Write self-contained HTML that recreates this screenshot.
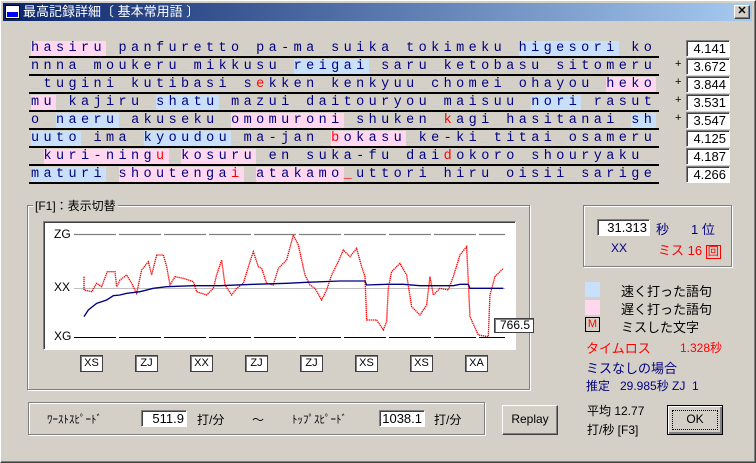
<!DOCTYPE html>
<html><head><meta charset="utf-8"><style>
*{margin:0;padding:0;box-sizing:border-box}
body{width:756px;height:463px;background:#d4d0c8;position:relative;overflow:hidden;font-family:"Liberation Sans","Noto Sans CJK JP",sans-serif;font-size:12px}
.a{position:absolute}
#win{position:absolute;left:0;top:0;width:756px;height:463px;border:1px solid #fff;border-right-color:#404040;border-bottom-color:#404040;box-shadow:inset -1px -1px 0 #808080}
#tb{position:absolute;left:3px;top:3px;width:749px;height:18px;background:linear-gradient(90deg,#0a246a,#a6caf0);color:#fff;font-size:13px;line-height:18px;padding-left:20px;font-family:"Liberation Sans","Noto Sans CJK JP",sans-serif}
.row{position:absolute;left:31px;height:17px;font-family:"Liberation Mono",monospace;font-size:13.5px;letter-spacing:4.4px;color:#000080;line-height:17px;white-space:pre;width:640px}
.rule{position:absolute;left:29px;width:630px;height:2px;background:#000}
.p{background:#ffd8f0}.b{background:#c8e0fa}.u{color:#c8c8c8}.r{color:#f00}
.num{position:absolute;left:686px;width:44px;height:17px;background:#fff;border:1px solid #808080;border-right-color:#fff;border-bottom-color:#fff;box-shadow:inset 1px 1px 0 #404040;text-align:right;padding-right:3px;font-size:13px;line-height:15px}
.plus{position:absolute;left:675px;font-size:11px}
.grp{position:absolute;border:1px solid #808080;box-shadow:1px 1px 0 #fff,inset 1px 1px 0 #fff}
.inp{position:absolute;background:#fff;border:1px solid #808080;border-right-color:#fff;border-bottom-color:#fff;box-shadow:inset 1px 1px 0 #404040;text-align:right;padding-right:2px;font-size:13px;line-height:16px}
.sb{position:absolute;width:23px;height:17px;background:#fff;border:1px solid #404040;box-shadow:inset 1px 1px 0 #808080;font-size:11px;text-align:center;line-height:15px}
.btn{position:absolute;background:#d4d0c8;border:1px solid #fff;border-right-color:#404040;border-bottom-color:#404040;box-shadow:inset -1px -1px 0 #808080;text-align:center;font-size:12px}
.nv{color:#000080}.rd{color:#f00}
</style></head><body>
<div id="win"></div>
<div id="tb">最高記録詳細〔 基本常用語 〕</div>
<div class="a" style="left:5px;top:5px;width:15px;height:14px;background:#fff;border:1px solid #000"><div style="position:absolute;left:1px;top:6px;width:11px;height:5px;background:#00f"></div></div>
<div class="btn" style="left:734px;top:5px;width:16px;height:14px;font-size:11px;line-height:11px;font-weight:bold">✕</div>

<div class="row" style="top:40px"><span class="p">hasiru</span><span class="u">_</span>panfuretto<span class="u">_</span>pa-ma<span class="u">_</span>suika<span class="u">_</span>tokimeku<span class="u">_</span><span class="b">higesori</span><span class="u">_</span>ko</div>
<div class="row" style="top:58px">nnna<span class="u">_</span>moukeru<span class="u">_</span>mikkusu<span class="u">_</span><span class="b">reigai</span><span class="u">_</span>saru<span class="u">_</span>ketobasu<span class="u">_</span>sitomeru</div>
<div class="row" style="top:76px"><span class="u">_</span>tugini<span class="u">_</span>kutibasi<span class="u">_</span>s<span class="r">e</span>kken<span class="u">_</span>kenkyuu<span class="u">_</span>chomei<span class="u">_</span>ohayou<span class="u">_</span><span class="p">heko</span></div>
<div class="row" style="top:94px"><span class="p">mu</span><span class="u">_</span>kajiru<span class="u">_</span><span class="b">shatu</span><span class="u">_</span>mazui<span class="u">_</span>daitouryou<span class="u">_</span>maisuu<span class="u">_</span><span class="b">nori</span><span class="u">_</span>rasut</div>
<div class="row" style="top:112px">o<span class="u">_</span><span class="b">naeru</span><span class="u">_</span>akuseku<span class="u">_</span><span class="p">omomuroni</span><span class="u">_</span>shuken<span class="u">_</span><span class="r">k</span>agi<span class="u">_</span>hasitanai<span class="u">_</span><span class="b">sh</span></div>
<div class="row" style="top:130px"><span class="b">uuto</span><span class="u">_</span>ima<span class="u">_</span><span class="b">kyoudou</span><span class="u">_</span>ma-jan<span class="u">_</span><span class="p"><span class="r">b</span>okasu</span><span class="u">_</span>ke-ki<span class="u">_</span>titai<span class="u">_</span>osameru</div>
<div class="row" style="top:148px"><span class="u">_</span><span class="p">kuri-ning<span class="r">u</span></span><span class="u">_</span><span class="p">kosuru</span><span class="u">_</span>en<span class="u">_</span>suka-fu<span class="u">_</span>dai<span class="r">d</span>okoro<span class="u">_</span>shouryaku<span class="u">_</span></div>
<div class="row" style="top:166px"><span class="b">maturi</span><span class="u">_</span><span class="p">shoutenga<span class="r">i</span></span><span class="u">_</span><span class="p">atakamo</span><span class="r">_</span>uttori<span class="u">_</span>hiru<span class="u">_</span>oisii<span class="u">_</span>sarige</div>
<div class="rule" style="top:56px"></div><div class="rule" style="top:74px"></div><div class="rule" style="top:92px"></div><div class="rule" style="top:110px"></div><div class="rule" style="top:128px"></div><div class="rule" style="top:146px"></div><div class="rule" style="top:164px"></div><div class="rule" style="top:182px"></div>

<div class="num" style="top:40px">4.141</div>
<div class="plus" style="top:58px">+</div><div class="num" style="top:58px">3.672</div>
<div class="plus" style="top:76px">+</div><div class="num" style="top:76px">3.844</div>
<div class="plus" style="top:94px">+</div><div class="num" style="top:94px">3.531</div>
<div class="plus" style="top:112px">+</div><div class="num" style="top:112px">3.547</div>
<div class="num" style="top:130px">4.125</div>
<div class="num" style="top:148px">4.187</div>
<div class="num" style="top:166px">4.266</div>

<div class="grp" style="left:27px;top:205px;width:503px;height:185px"></div>
<div class="a" style="left:33px;top:197px;background:#d4d0c8;padding:0 2px;font-size:12px">[F1]：表示切替</div>
<div class="a" style="left:43px;top:221px;width:473px;height:129px;background:#fff;border:1px solid #808080;border-right-color:#fff;border-bottom-color:#fff;box-shadow:inset 1px 1px 0 #404040"></div>
<div class="a" style="left:54px;top:227px;font-size:12px">ZG</div>
<div class="a" style="left:54px;top:280px;font-size:12px">XX</div>
<div class="a" style="left:54px;top:329px;font-size:12px">XG</div>
<svg class="a" style="left:0;top:0" width="756" height="463">
<line x1="74" y1="234.5" x2="505" y2="234.5" stroke="#808080" stroke-width="1.2" stroke-dasharray="42 3"/>
<line x1="74" y1="288.5" x2="505" y2="288.5" stroke="#c0c0c0"/>
<line x1="74" y1="337.5" x2="505" y2="337.5" stroke="#000" stroke-dasharray="42 3"/>
<g transform="translate(20 195) scale(0.3333)" fill="none">
<polyline stroke="#f00" stroke-width="4" stroke-dasharray="4 2" points="192,245 192,285 215,290 230,265 245,275 262,230 285,230 290,275 300,255 320,240 335,265 350,295 365,225 385,200 395,240 410,180 430,180 440,215 450,270 465,245 490,250 520,260 530,290 560,300 580,280 590,240 605,195 615,270 635,300 650,280 670,265 690,200 700,170 715,215 725,220 740,265 760,270 775,220 800,195 820,120 835,150 855,240 870,270 885,280 905,315 920,285 935,240 955,200 970,165 990,185 1010,160 1025,215 1035,245 1040,375 1070,375 1090,405 1100,380 1105,280 1115,230 1140,205 1160,240 1175,335 1200,360 1220,330 1230,245 1240,300 1260,280 1285,285 1300,245 1320,180 1340,155 1350,365 1375,420 1405,425 1410,300 1425,245 1450,220"/>
<polyline stroke="#000080" stroke-width="4" points="192,365 205,345 230,325 260,315 280,302 300,300 320,295 360,290 400,280 440,275 520,272 600,272 700,268 800,265 860,262 960,258 1035,258 1040,270 1100,268 1150,268 1200,272 1300,272 1320,268 1345,268 1350,280 1450,280"/>
</g></svg>
<div class="a" style="left:494px;top:318px;width:40px;height:15px;background:#fff;border:1px solid #404040;box-shadow:inset 1px 1px 0 #808080;text-align:right;padding-right:3px;font-size:12px;line-height:13px">766.5</div>
<div class="sb" style="left:80px;top:355px">XS</div><div class="sb" style="left:135px;top:355px">ZJ</div><div class="sb" style="left:190px;top:355px">XX</div><div class="sb" style="left:245px;top:355px">ZJ</div><div class="sb" style="left:300px;top:355px">ZJ</div><div class="sb" style="left:355px;top:355px">XS</div><div class="sb" style="left:410px;top:355px">XS</div><div class="sb" style="left:465px;top:355px">XA</div>

<div class="grp" style="left:583px;top:205px;width:149px;height:62px"></div>
<div class="inp" style="left:597px;top:219px;width:53px;height:17px">31.313</div>
<div class="a nv" style="left:656px;top:219px;font-size:13px">秒</div>
<div class="a nv" style="left:691px;top:219px;font-size:13px">1 位</div>
<div class="a nv" style="left:611px;top:241px;font-size:12px">XX</div>
<div class="a rd" style="left:658px;top:240px;font-size:13px">ミス 16 <span style="border:1px solid #f00;font-size:11px;padding:0 1px">回</span></div>

<div class="a" style="left:585px;top:282px;width:15px;height:15px;background:#c8e0fa"></div>
<div class="a" style="left:621px;top:281px;font-size:13px">速く打った語句</div>
<div class="a" style="left:585px;top:300px;width:15px;height:15px;background:#ffd8f0"></div>
<div class="a" style="left:621px;top:299px;font-size:13px">遅く打った語句</div>
<div class="a rd" style="left:585px;top:317px;width:15px;height:15px;border:1px solid #000;font-size:11px;text-align:center;line-height:13px">M</div>
<div class="a" style="left:621px;top:317px;font-size:13px">ミスした文字</div>
<div class="a rd" style="left:586px;top:338px;font-size:13px">タイムロス</div>
<div class="a rd" style="left:680px;top:339px;font-size:12px">1.328秒</div>
<div class="a nv" style="left:586px;top:358px;font-size:13px">ミスなしの場合</div>
<div class="a nv" style="left:586px;top:377px;font-size:12px">推定 &nbsp;&nbsp;29.985秒 ZJ &nbsp;1</div>

<div class="grp" style="left:28px;top:402px;width:457px;height:33px"></div>
<div class="a" style="left:47px;top:411px;font-size:11px">ﾜｰｽﾄｽﾋﾟｰﾄﾞ</div>
<div class="inp" style="left:141px;top:410px;width:46px;height:17px">511.9</div>
<div class="a" style="left:197px;top:411px;font-size:12px">打/分</div>
<div class="a" style="left:252px;top:411px;font-size:12px">～</div>
<div class="a" style="left:292px;top:411px;font-size:11px">ﾄｯﾌﾟｽﾋﾟｰﾄﾞ</div>
<div class="inp" style="left:379px;top:410px;width:46px;height:17px">1038.1</div>
<div class="a" style="left:434px;top:411px;font-size:12px">打/分</div>
<div class="btn" style="left:502px;top:405px;width:56px;height:30px;line-height:27px">Replay</div>
<div class="a" style="left:587px;top:402px;font-size:12px">平均 12.77</div>
<div class="a" style="left:587px;top:421px;font-size:12px">打/秒 [F3]</div>
<div class="btn" style="left:667px;top:405px;width:56px;height:30px;border:1px solid #000;box-shadow:inset 1px 1px 0 #fff,inset -2px -2px 0 #808080;line-height:26px"><div style="position:absolute;left:4px;top:4px;right:4px;bottom:4px;border:1px dotted #000"></div>OK</div>
</body></html>
